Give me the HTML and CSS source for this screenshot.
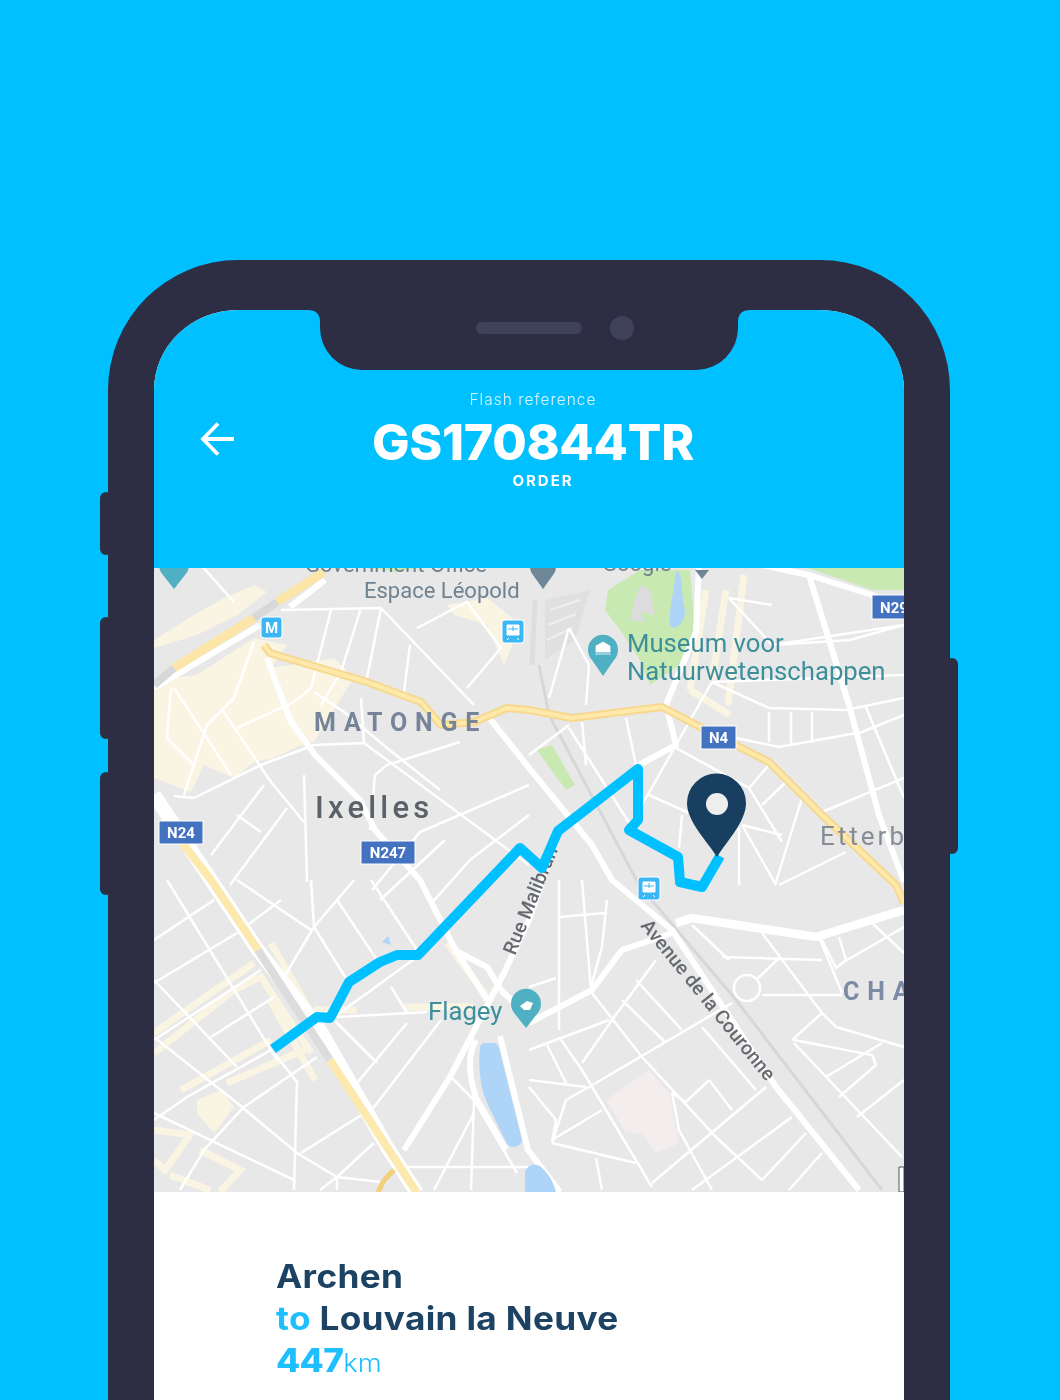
FILE: index.html
```html
<!DOCTYPE html>
<html lang="en">
<head>
    <meta charset="UTF-8">
    <title>Flash reference GS170844TR</title>
    <link rel="stylesheet" href="styles.css">
</head>
<body>
    <div class="phone">
        <span class="side-btn btn-a"></span>
        <span class="side-btn btn-b"></span>
        <span class="side-btn btn-c"></span>
        <span class="side-btn btn-power"></span>
        <div class="screen">
            <!-- notch with speaker and camera -->
            <svg class="notch" width="442" height="60" viewBox="0 0 442 60">
                <path d="M0 0Q12 0 12 12V18A42 42 0 0 0 54 60H388A42 42 0 0 0 430 18V12Q430 0 442 0Z" fill="#2d2e43"/>
                <rect x="168" y="12" width="106" height="12" rx="6" fill="#40415a"/>
                <circle cx="314" cy="18" r="12" fill="#40415a"/>
            </svg>

            <header class="top">
                <svg class="back" width="36" height="36" viewBox="0 0 36 36">
                    <path d="M34 18H4M18 2.500L3 18 18 33.500" fill="none" stroke="#fff" stroke-width="3.800"/>
                </svg>
                <p class="top-label">Flash reference</p>
                <h1 class="top-ref">GS170844TR</h1>
                <p class="top-order">ORDER</p>
            </header>

            <div class="map">
                <svg class="map-svg" width="750" height="624" viewBox="154 568 750 624">
                    <rect x="154" y="568" width="750" height="624" fill="#e8e8e8"/>

                    <!-- built-up areas, parks -->
                    <g fill="#faf4e3">
                        <path d="M154 688L171 678 197 675 254 638 287 645 271 668 334 658 354 678 341 698 314 742 301 745 274 758 254 762 234 778 204 765 191 792 154 778Z"/>
                        <path d="M194 615L224 598 254 585 267 592 237 615 197 635 154 648V640Z"/>
                        <path d="M447 605L487 598 521 625 504 665 487 625 454 615Z"/>
                        <path d="M197 1100L221 1090 234 1107 214 1133 197 1113Z"/>
                    </g>
                    <g fill="none" stroke="#faf4e3" stroke-width="7">
                        <path d="M706 590L690 690M726 590L712 680M744 575L728 705M690 690L730 715"/>
                        <path d="M154 1033L254 963M154 1053L234 990 261 977 311 1053M181 1090L271 1040M227 1083L311 1047M271 943L311 1013M314 1010H357M404 1007H474M447 943L487 997"/>
                        <path d="M154 1130L190 1135 165 1170 154 1160M200 1150L240 1170 220 1192M170 1175L210 1190M270 1000L315 1080"/>
                    </g>
                    <path d="M606 1100L649 1070 669 1093 679 1143 656 1153 642 1133 626 1133Z" fill="#f3eeed"/>
                    <g fill="#c9e9b2">
                        <path d="M608 590L640 570 690 570 695 630 680 665 650 685 640 660 620 630 605 610Z"/>
                        <path d="M808 568H904V590L872 590Z"/>
                        <path d="M368 568H420L395 572 385 570Z"/>
                        <path d="M537 750L552 745 575 785 566 790Z"/>
                    </g>
                    <path d="M640 585L650 590 655 615 640 612 645 622 630 620 635 600Z" fill="#dcdcdc"/>

                    <!-- railway yard -->
                    <path d="M539 665L549 715 639 885 736 1000 882 1190" fill="none" stroke="#d5d7db" stroke-width="3"/>
                    <path d="M535 600L532 665" fill="none" stroke="#dcdee2" stroke-width="5"/>
                    <path d="M545 600L590 590 575 640 545 660Z" fill="#e0e0e0"/>
                    <path d="M550 610L580 600M548 625L576 614M547 640L572 628" fill="none" stroke="#efefef" stroke-width="2"/>

                    <!-- small streets -->
                    <g fill="none" stroke="#fff" stroke-width="2.500">
                        <path d="M281 610L381 608M331 610L311 688 294 702 237 728M361 608L341 672 321 705M381 608L367 678M381 608L474 705M417 628L467 602 501 648 467 688M410 645L404 692M201 565L234 602M254 642L234 698 207 725 184 795M174 688L231 775M171 688L167 738 194 765M221 708L271 782 304 822M194 798L261 765 314 745 364 743M174 796L194 798M364 743L361 698M364 743L529 865M314 692L344 712 387 748 440 790M460 742L387 765 375 775 370 830M304 775L307 882M264 785L211 855M287 808L230 885M237 815L261 832M529 785L420 832 372 890M445 840L380 900M529 815L470 860 430 905"/>
                        <path d="M569 628L549 698M569 628L589 665 586 705M772 605L729 598M729 598L772 645 904 625M772 645L850 640 904 625M712 682L904 675M712 682L769 708 846 710 904 698M769 712V742M791 712V743M812 712V743M736 738L779 747 862 732 904 715M712 682L676 745 642 805M676 748L749 788 782 842M649 795L689 813M742 825L782 835M769 765L749 788M786 782L762 805M802 798L775 885M682 815L679 848M742 825L776 885M739 828V885M904 778L822 812M846 852L779 885M865 705L904 798M582 722L586 765M626 718L636 765M569 725L529 755M569 728L640 840"/>
                        <path d="M559 880V1030M582 880L591 990M607 900L602 947 591 987M559 917L606 913M529 987L556 978M592 993L642 1057 716 1137 762 1180M636 980L682 1030M622 1000L666 1043M656 960L612 1020 582 1063M732 1003L589 1087 566 1100 552 1143M702 1027L756 1090M529 1050L609 1020M546 1043L566 1083M559 1037L582 1070 652 1187M529 1080L586 1087M529 1087L556 1120 552 1143M552 1143L636 1163M602 1110L552 1140M596 1158L602 1190M709 1080L686 1102 672 1093M709 1080L732 1110M672 1093L679 1130 712 1190M766 1087L652 1183M792 1117L692 1190M806 1133L762 1180M822 1153L789 1190M762 933L822 1013 836 1027 904 1047M722 957L822 960M756 980L779 958M762 995H842M822 1013L792 1040M794 1040L872 1055 876 1065 839 1097M826 1077L882 1043M857 1117L904 1080M794 1043L902 1157M819 937L842 993M839 937L846 960 836 968 822 940M842 963L904 927M872 923L904 953M692 925L729 960"/>
                        <path d="M154 940L214 900M154 983L237 933 281 900M167 880L277 1060M154 980L237 1067M274 997L211 1037M261 970L154 1040M311 880L314 927 284 977M237 880L311 930M337 900L377 960M371 880L417 950M354 880L314 927M314 927L347 980M417 957L334 1017M391 987L407 1013M337 1017L427 1012M334 1020L377 1063M407 1023L357 1083M441 1020L374 1107 301 1153M317 1057L244 1107 204 1150 180 1190M271 1050L187 1097 154 1120M154 1037L237 1103 297 1153 337 1177 381 1182M297 1080L294 1190M274 1053L297 1082M154 1113L294 1180M337 1177L374 1143M337 1177L320 1190M337 1177V1190M404 1167H529M451 1077L474 1100 517 1173M474 1100L471 1190M474 1113L434 1190"/>
                    </g>

                    <!-- wider streets -->
                    <g fill="none" stroke="#fff" stroke-width="6" stroke-linejoin="round">
                        <path d="M267 658L290 720 315 755 360 800 375 830 420 880 454 947 487 1000"/>
                        <path d="M487 715L529 768 592 845 612 880 672 930 776 1087 859 1190"/>
                        <path d="M762 565L809 575 872 595 904 610M809 575L849 705 879 815 904 882"/>
                        <path d="M529 1023L592 990 622 950 672 933"/>
                        <path d="M404 1150L450 1077 504 973 529 920 560 830"/>
                        <path d="M699 565L696 632 666 705 676 745 639 765"/>
                        <path d="M454 950L487 967 501 990M501 990L529 1017"/>
                        <path d="M500 1036L528 1150 560 1192M476 1040Q464 1060 476 1098L506 1150"/>
                        <path d="M154 688L260 625M290 607L325 580"/>
                    </g>
                    <path d="M676 923L692 918 816 937 904 910" fill="none" stroke="#fff" stroke-width="8.500"/>

                    <!-- water -->
                    <g fill="#aed4f8">
                        <path d="M676 571C684 575 680 590 685 610 685 625 673 632 670 625 668 610 675 590 676 571Z"/>
                        <path d="M484 1043H494Q498 1043 499 1048L522 1140Q522 1146 513 1147 509 1147 506 1142L487 1103Q477 1080 480 1048 481 1043 484 1043Z"/>
                        <path d="M525 1172Q529 1162 540 1166 552 1176 556 1192H525Z"/>
                        <path d="M382 942L388 936 391 945Z"/>
                    </g>

                    <!-- yellow main roads -->
                    <g fill="none" stroke-linejoin="round">
                        <path d="M154 795L211 880 258 950 320 1030 387 1147 417 1193" stroke="#fff" stroke-width="14"/>
                        <path d="M180 840L211 880 258 950" stroke="#fce9ad" stroke-width="8"/>
                        <path d="M258 950L330 1060" stroke="#dcdcdc" stroke-width="8"/>
                        <path d="M330 1060L387 1147 417 1193" stroke="#fce9ad" stroke-width="8"/>
                        <path d="M174 668L254 618M277 602L324 572" stroke="#fbe6a8" stroke-width="9"/>
                        <path d="M154 685L174 668" stroke="#d8d8d8" stroke-width="8"/>
                        <path d="M254 618L277 602" stroke="#d8d8d8" stroke-width="8"/>
                        <path d="M264 645L270 653 367 682 421 702 441 725 474 722 507 708 529 710 572 718 662 707 702 728 769 762 822 815 896 885 904 903" stroke="#f6d88e" stroke-width="8"/>
                        <path d="M264 645L270 653 367 682 421 702 441 725 474 722 507 708 529 710 572 718 662 707 702 728 769 762 822 815 896 885 904 903" stroke="#fee9ab" stroke-width="4"/>
                        <path d="M384 1180L394 1170M378 1192L384 1180" stroke="#f2cf78" stroke-width="5"/>
                    </g>
                    <circle cx="747" cy="988" r="13" fill="#e8e8e8" stroke="#fff" stroke-width="2.500"/>

                    <!-- place labels -->
                    <text class="lbl-poi" x="305" y="572">Government Office</text>
                    <text class="lbl-poi" x="602" y="571">Google</text>
                    <text class="lbl-poi" x="364" y="598">Espace Léopold</text>
                    <text class="lbl-museum" x="627" y="652">Museum voor</text>
                    <text class="lbl-museum" x="627" y="680">Natuurwetenschappen</text>
                    <text class="lbl-museum" x="428" y="1020">Flagey</text>
                    <text class="lbl-area" x="314" y="731">MATONGE</text>
                    <text class="lbl-area lbl-cha" x="843" y="1000">CHA</text>
                    <text class="lbl-town" x="315" y="818">Ixelles</text>
                    <text class="lbl-town lbl-etterb" x="820" y="845">Etterb</text>
                    <text class="lbl-street" transform="translate(515 956) rotate(-68)">Rue Malibran</text>
                    <text class="lbl-street" transform="translate(640 926) rotate(51)">Avenue de la Couronne</text>

                    <!-- road shields -->
                    <g class="shields">
                        <rect x="159" y="821" width="44" height="23" fill="#4372c0" stroke="#fff"/>
                        <text x="181" y="838">N24</text>
                        <rect x="361" y="841" width="54" height="23" fill="#4372c0" stroke="#fff"/>
                        <text x="388" y="858">N247</text>
                        <rect x="701" y="726" width="35" height="23" fill="#4372c0" stroke="#fff"/>
                        <text x="718.500" y="743">N4</text>
                        <rect x="872" y="595" width="44" height="24" fill="#4372c0" stroke="#fff"/>
                        <text x="894" y="613">N29</text>
                    </g>

                    <!-- transit stops -->
                    <rect x="261" y="617" width="21" height="21" rx="3" fill="#3bb7f5" stroke="#fff"/>
                    <text class="metro" x="271.500" y="633">M</text>
                    <g>
                        <rect x="502" y="620" width="22" height="23" rx="3" fill="#3bb7f5" stroke="#fff"/>
                        <path d="M507 625h12v10h-12zM509 638l-2 2M517 638l2 2" fill="#fff" stroke="#fff"/>
                        <path d="M508 629h10M513 626v5" stroke="#3bb7f5"/>
                    </g>
                    <g transform="translate(136 257)">
                        <rect x="502" y="620" width="22" height="23" rx="3" fill="#3bb7f5" stroke="#fff"/>
                        <path d="M507 625h12v10h-12zM509 638l-2 2M517 638l2 2" fill="#fff" stroke="#fff"/>
                        <path d="M508 629h10M513 626v5" stroke="#3bb7f5"/>
                    </g>

                    <!-- map pins -->
                    <path d="M603 676L592 660A15 15 0 1 1 614 660Z" fill="#4fb0c3"/>
                    <path d="M596 652V646L603 642 610 646V652ZM595 654H611" fill="#fff" stroke="#fff" stroke-width=".800"/>
                    <path d="M526 1028L515 1014A15 15 0 1 1 537 1014Z" fill="#4fb0c3"/>
                    <path d="M520 1006L527 1001 533 1003 530 1010 524 1010Z" fill="#fff"/>
                    <path d="M174 589L163 575A15 15 0 1 1 185 575Z" fill="#4fb0c3"/>
                    <path d="M543 589L533 575A13 13 0 1 1 553 575Z" fill="#6d8796"/>
                    <path d="M702 579L695 570H709Z" fill="#6d8796"/>

                    <!-- route and destination -->
                    <path d="M273 1049L317 1017 330 1018 349 982 380 962 397 955 418 955 520 848 542 868 558 831 638 769V820L629 830 678 857 680 882 702 887 720 856" fill="none" stroke="#00c0ff" stroke-width="10" stroke-linejoin="round"/>
                    <path d="M717 857C708 842 687 822 687 803A29.500 29.500 0 0 1 746 803C746 822 726 842 717 857Z" fill="#183f5f"/>
                    <circle cx="717" cy="804" r="11" fill="#eeeeee"/>

                    <path d="M904 1167H899V1192H904Z" fill="#fff" stroke="#555" stroke-width="1"/>
                </svg>
            </div>

            <section class="trip">
                <p class="trip-line">Archen</p>
                <p class="trip-line"><span class="accent">to</span> Louvain la Neuve</p>
                <p class="trip-line trip-dist accent">447<span class="trip-unit">km</span></p>
            </section>
        </div>
    </div>
</body>
</html>
```

FILE: styles.css
```css
html, body {
    height: 1400px;
    overflow: hidden;
}
body {
    margin: 0;
    background: #00c0ff;
    font-family: Inter, "Liberation Sans", sans-serif;
}
p, h1 {
    margin: 0;
}

/* Phone */
.phone {
    position: relative;
    width: 842px;
    margin: 260px 0 0 108px;
}
.screen {
    position: relative;
    height: 1300px;
    box-sizing: border-box;
    border: solid #2d2e43;
    border-width: 50px 46px 0;
    border-radius: 130px 130px 0 0;
    overflow: hidden;
    background: #fff;
}
.notch {
    position: absolute;
    top: 0;
    left: 154px;
    z-index: 2;
    display: block;
}
.side-btn {
    position: absolute;
    left: -8px;
    width: 12px;
    background: #2d2e43;
    border-radius: 6px;
}
.btn-a {
    top: 232px;
    height: 63px;
}
.btn-b {
    top: 357px;
    height: 122px;
}
.btn-c {
    top: 512px;
    height: 123px;
}
.btn-power {
    top: 398px;
    left: 838px;
    height: 196px;
}

/* Header */
.top {
    position: relative;
    height: 258px;
    box-sizing: border-box;
    padding: 80px 0 0 8px;
    background: #00c0ff;
    color: #fff;
    display: flex;
    flex-direction: column;
    align-items: center;
}
.back {
    position: absolute;
    top: 111px;
    left: 46px;
}
.top-label {
    font-size: 15.500px;
    line-height: 19px;
    font-weight: 300;
    letter-spacing: 1px;
    opacity: .85;
    filter: blur(.3px);
}
.top-ref {
    margin-top: 5px;
    font-size: 50px;
    line-height: 56px;
    font-weight: 800;
    letter-spacing: -.3px;
    filter: blur(.4px);
}
.top-order {
    margin: 1px 0 0 20px;
    font-size: 15px;
    line-height: 19px;
    font-weight: 700;
    letter-spacing: 2px;
    filter: blur(.3px);
}

/* Map */
.map {
    height: 624px;
    overflow: hidden;
}
.map-svg {
    display: block;
    filter: blur(.55px);
    font-family: Roboto, sans-serif;
}
.lbl-poi {
    font-size: 22px;
    fill: #6f8290;
}
.lbl-museum {
    font-size: 25.700px;
    fill: #3e8f9c;
}
.lbl-area {
    font-size: 25px;
    font-weight: 700;
    letter-spacing: 7.800px;
    fill: #76849a;
}
.lbl-cha {
    fill: #7b8aa5;
}
.lbl-town {
    font-size: 31px;
    font-weight: 500;
    letter-spacing: 4.200px;
    fill: #5b6168;
}
.lbl-etterb {
    font-size: 26px;
    font-weight: 400;
    letter-spacing: 3px;
    fill: #868c95;
}
.lbl-street {
    font-size: 19.500px;
    font-weight: 500;
    fill: #666a70;
}
.shields text {
    font-size: 15px;
    font-weight: 700;
    fill: #fff;
    text-anchor: middle;
}
.metro {
    font-size: 15px;
    font-weight: 700;
    fill: #fff;
    text-anchor: middle;
}

/* Trip summary */
.trip {
    padding: 64px 0 0 122px;
    transform: scaleX(1.1);
    transform-origin: 122px 0;
    filter: blur(.4px);
}
.trip-line {
    font-size: 32px;
    line-height: 42px;
    font-weight: 700;
    letter-spacing: .3px;
    color: #1c4363;
}
.trip-dist {
    font-weight: 800;
    letter-spacing: -.6px;
    color: #1fbfff;
}
.accent {
    color: #1fbfff;
}
.trip-unit {
    font-size: 25px;
    font-weight: 300;
    letter-spacing: 0;
}
```
